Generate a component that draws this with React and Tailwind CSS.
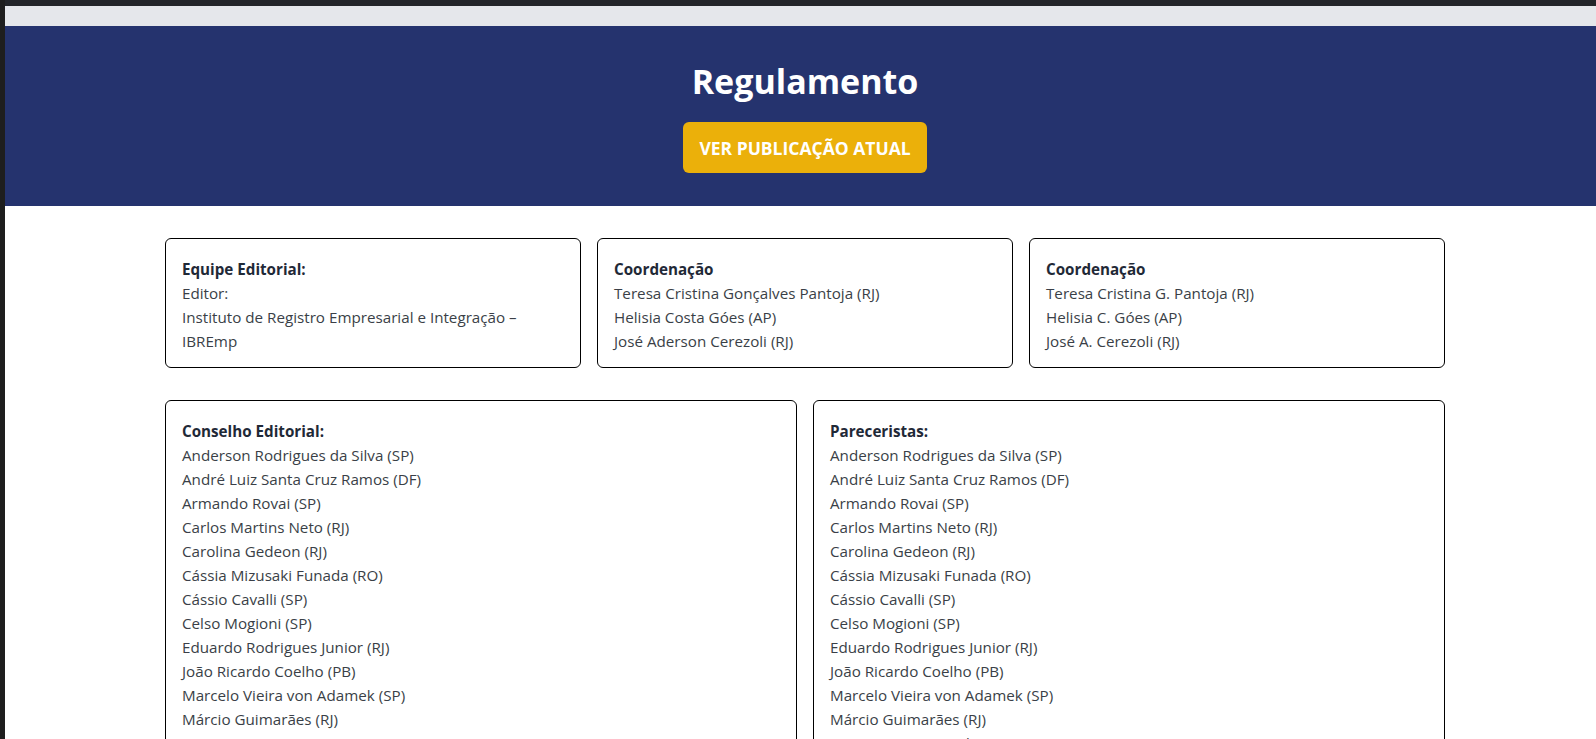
import React from 'react';

const conselho = [
  'Anderson Rodrigues da Silva (SP)',
  'André Luiz Santa Cruz Ramos (DF)',
  'Armando Rovai (SP)',
  'Carlos Martins Neto (RJ)',
  'Carolina Gedeon (RJ)',
  'Cássia Mizusaki Funada (RO)',
  'Cássio Cavalli (SP)',
  'Celso Mogioni (SP)',
  'Eduardo Rodrigues Junior (RJ)',
  'João Ricardo Coelho (PB)',
  'Marcelo Vieira von Adamek (SP)',
  'Márcio Guimarães (RJ)',
  'Marcos Pereira (PB)',
  'Newton De Lucca (SP)',
];

const pareceristas = [
  'Anderson Rodrigues da Silva (SP)',
  'André Luiz Santa Cruz Ramos (DF)',
  'Armando Rovai (SP)',
  'Carlos Martins Neto (RJ)',
  'Carolina Gedeon (RJ)',
  'Cássia Mizusaki Funada (RO)',
  'Cássio Cavalli (SP)',
  'Celso Mogioni (SP)',
  'Eduardo Rodrigues Junior (RJ)',
  'João Ricardo Coelho (PB)',
  'Marcelo Vieira von Adamek (SP)',
  'Márcio Guimarães (RJ)',
  'Marcus Vinicius Tadeu Pereira (PB)',
  'Newton De Lucca (SP)',
];

const Card = ({ title, lines }) => (
  <div className="border border-black rounded-md px-4 pt-[18px] pb-[14px] bg-white">
    <p className="font-bold text-[#1f2937]">{title}</p>
    {lines.map((line, i) => (
      <p key={i} className="text-[#3a3f47]">{line}</p>
    ))}
  </div>
);

export default function App() {
  return (
    <div className="flex h-[739px] overflow-hidden bg-[#1e1e1e] font-['Open_Sans',sans-serif] text-[15.2px] leading-6">
      <div className="w-[5px] shrink-0" />
      <div className="w-[1600px] shrink-0 flex flex-col">
        <div className="h-[6px] shrink-0 bg-[#232529]" />
        <div className="h-[20px] shrink-0 bg-[#e5e7eb]" />
        <header className="bg-[#25336e] h-[180px] shrink-0 flex flex-col items-center pt-[31px]">
          <h1 className="text-white font-bold text-[34px] leading-[48px]">Regulamento</h1>
          <button className="mt-[17px] bg-[#ebb00a] text-white font-bold uppercase text-[17.5px] w-[244px] h-[51px] rounded-md">
            Ver Publicação Atual
          </button>
        </header>
        <main className="flex-1 shrink-0 bg-white pt-[32px]">
          <div className="w-[1280px] mx-auto">
            <div className="grid grid-cols-3 gap-4">
              <Card
                title="Equipe Editorial:"
                lines={['Editor:', 'Instituto de Registro Empresarial e Integração – IBREmp']}
              />
              <Card
                title="Coordenação"
                lines={['Teresa Cristina Gonçalves Pantoja (RJ)', 'Helisia Costa Góes (AP)', 'José Aderson Cerezoli (RJ)']}
              />
              <Card
                title="Coordenação"
                lines={['Teresa Cristina G. Pantoja (RJ)', 'Helisia C. Góes (AP)', 'José A. Cerezoli (RJ)']}
              />
            </div>
            <div className="grid grid-cols-2 gap-4 mt-8">
              <Card title="Conselho Editorial:" lines={conselho} />
              <Card title="Pareceristas:" lines={pareceristas} />
            </div>
          </div>
        </main>
      </div>
    </div>
  );
}
